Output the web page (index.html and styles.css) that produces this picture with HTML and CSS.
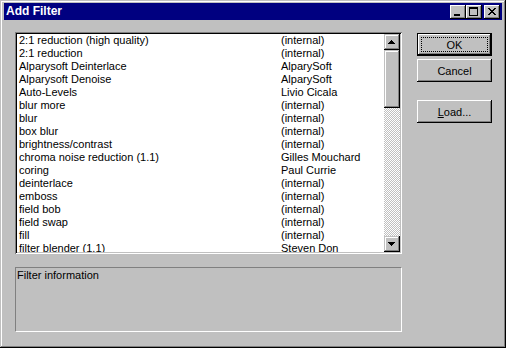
FILE: index.html
```html
<!DOCTYPE html>
<html>
<head>
<meta charset="utf-8">
<title>Add Filter</title>
<link rel="stylesheet" href="styles.css">
</head>
<body>
<div class="window">
  <div class="titlebar">
    <span class="title">Add Filter</span>
    <div class="tbtns">
      <div class="tb"><svg width="16" height="14" viewBox="0 0 16 14" shape-rendering="crispEdges"><path d="M4 9h6v2H4z" fill="#000"/></svg></div>
      <div class="tb"><svg width="16" height="14" viewBox="0 0 16 14" shape-rendering="crispEdges"><path d="M3 2h9v9H3z M4 4v6h7V4z" fill="#000" fill-rule="evenodd"/></svg></div>
      <div class="tb close"><svg width="16" height="14" viewBox="0 0 16 14" shape-rendering="crispEdges"><path d="M4 3h2v1H4z M10 3h2v1h-2z M5 4h2v1H5z M9 4h2v1H9z M6 5h4v1H6z M7 6h2v1H7z M6 7h4v1H6z M5 8h2v1H5z M9 8h2v1H9z M4 9h2v1H4z M10 9h2v1h-2z" fill="#000"/></svg></div>
    </div>
  </div>
  <div class="client">
    <div class="leftcol">
      <div class="listbox">
        <div class="rows">
          <div class="row"><span>2:1 reduction (high quality)</span><span>(internal)</span></div>
          <div class="row"><span>2:1 reduction</span><span>(internal)</span></div>
          <div class="row"><span>Alparysoft Deinterlace</span><span>AlparySoft</span></div>
          <div class="row"><span>Alparysoft Denoise</span><span>AlparySoft</span></div>
          <div class="row"><span>Auto-Levels</span><span>Livio Cicala</span></div>
          <div class="row"><span>blur more</span><span>(internal)</span></div>
          <div class="row"><span>blur</span><span>(internal)</span></div>
          <div class="row"><span>box blur</span><span>(internal)</span></div>
          <div class="row"><span>brightness/contrast</span><span>(internal)</span></div>
          <div class="row"><span>chroma noise reduction (1.1)</span><span>Gilles Mouchard</span></div>
          <div class="row"><span>coring</span><span>Paul Currie</span></div>
          <div class="row"><span>deinterlace</span><span>(internal)</span></div>
          <div class="row"><span>emboss</span><span>(internal)</span></div>
          <div class="row"><span>field bob</span><span>(internal)</span></div>
          <div class="row"><span>field swap</span><span>(internal)</span></div>
          <div class="row"><span>fill</span><span>(internal)</span></div>
          <div class="row"><span>filter blender (1.1)</span><span>Steven Don</span></div>
        </div>
        <div class="scrollbar">
          <div class="sb-btn"><svg width="16" height="16" viewBox="0 0 16 16" shape-rendering="crispEdges"><path d="M7 6h1v1H7z M6 7h3v1H6z M5 8h5v1H5z M4 9h7v1H4z" fill="#000"/></svg></div>
          <div class="thumb"></div>
          <div class="track"></div>
          <div class="sb-btn"><svg width="16" height="16" viewBox="0 0 16 16" shape-rendering="crispEdges"><path d="M4 6h7v1H4z M5 7h5v1H5z M6 8h3v1H6z M7 9h1v1H7z" fill="#000"/></svg></div>
        </div>
      </div>
      <div class="info">Filter information</div>
    </div>
    <div class="buttons">
      <div class="btn default"><span class="focus">OK</span></div>
      <div class="btn">Cancel</div>
      <div class="btn load"><span><u>L</u>oad...</span></div>
    </div>
  </div>
</div>
</body>
</html>
```
FILE: styles.css
```css
* { box-sizing: border-box; }

body {
  margin: 0;
  background: #c0c0c0;
  font-family: "Liberation Sans", Arial, sans-serif;
  font-size: 11px;
  color: #000;
}

.window {
  width: 506px;
  height: 348px;
  background: #c0c0c0;
  padding: 3px 4px 4px 4px;
  display: flex;
  flex-direction: column;
  box-shadow: inset -1px -1px #000, inset 1px 1px #c0c0c0, inset -2px -2px #808080, inset 2px 2px #fff;
}

.titlebar {
  height: 17px;
  background: #000080;
  color: #fff;
  display: flex;
  align-items: center;
  justify-content: space-between;
  padding: 0 2px;
  flex: none;
}

.title {
  font-weight: bold;
  font-size: 12px;
  line-height: 17px;
}

.tbtns {
  display: flex;
  align-items: center;
}

.tb {
  width: 16px;
  height: 14px;
  background: #c0c0c0;
  box-shadow: inset -1px -1px #000, inset 1px 1px #fff, inset -2px -2px #808080, inset 2px 2px #c0c0c0;
}

.tb svg { display: block; }

.tb.close { margin-left: 2px; }

.client {
  display: flex;
  gap: 15px;
  padding: 12px 0 0 11px;
}

.leftcol {
  width: 387px;
  display: flex;
  flex-direction: column;
}

.listbox {
  height: 222px;
  background: #fff;
  padding: 2px;
  display: flex;
  box-shadow: inset 1px 1px #808080, inset -1px -1px #fff, inset 2px 2px #000, inset -2px -2px #c0c0c0;
}

.rows {
  flex: 1;
  overflow: hidden;
  padding-left: 2px;
}

.row {
  display: grid;
  grid-template-columns: 262px 1fr;
  height: 13px;
  line-height: 13px;
  white-space: nowrap;
}

.scrollbar {
  width: 16px;
  display: flex;
  flex-direction: column;
}

.sb-btn, .thumb {
  background: #c0c0c0;
  box-shadow: inset -1px -1px #000, inset 1px 1px #c0c0c0, inset -2px -2px #808080, inset 2px 2px #fff;
}

.sb-btn { height: 16px; flex: none; }
.sb-btn svg { display: block; }

.thumb { height: 58px; flex: none; }

.track {
  flex: 1;
  background: repeating-conic-gradient(#c0c0c0 0 25%, #fff 0 50%) 0 0 / 2px 2px;
}

.info {
  margin-top: 13px;
  height: 65px;
  border: 1px solid;
  border-color: #808080 #fff #fff #808080;
  padding: 1px;
  line-height: 13px;
}

.buttons {
  width: 75px;
  padding-top: 1px;
  display: flex;
  flex-direction: column;
}

.btn {
  height: 23px;
  display: flex;
  align-items: center;
  justify-content: center;
  background: #c0c0c0;
  box-shadow: inset -1px -1px #000, inset 1px 1px #fff, inset -2px -2px #808080, inset 2px 2px #c0c0c0;
  margin-bottom: 3px;
}

.btn.default {
  padding: 4px;
  box-shadow: inset 0 0 0 1px #000, inset -2px -2px #000, inset 2px 2px #fff, inset -3px -3px #808080;
}

.focus {
  flex: 1;
  align-self: stretch;
  border: 1px dotted #000;
  display: flex;
  align-items: center;
  justify-content: center;
}

.btn.load { margin-top: 15px; }
```
